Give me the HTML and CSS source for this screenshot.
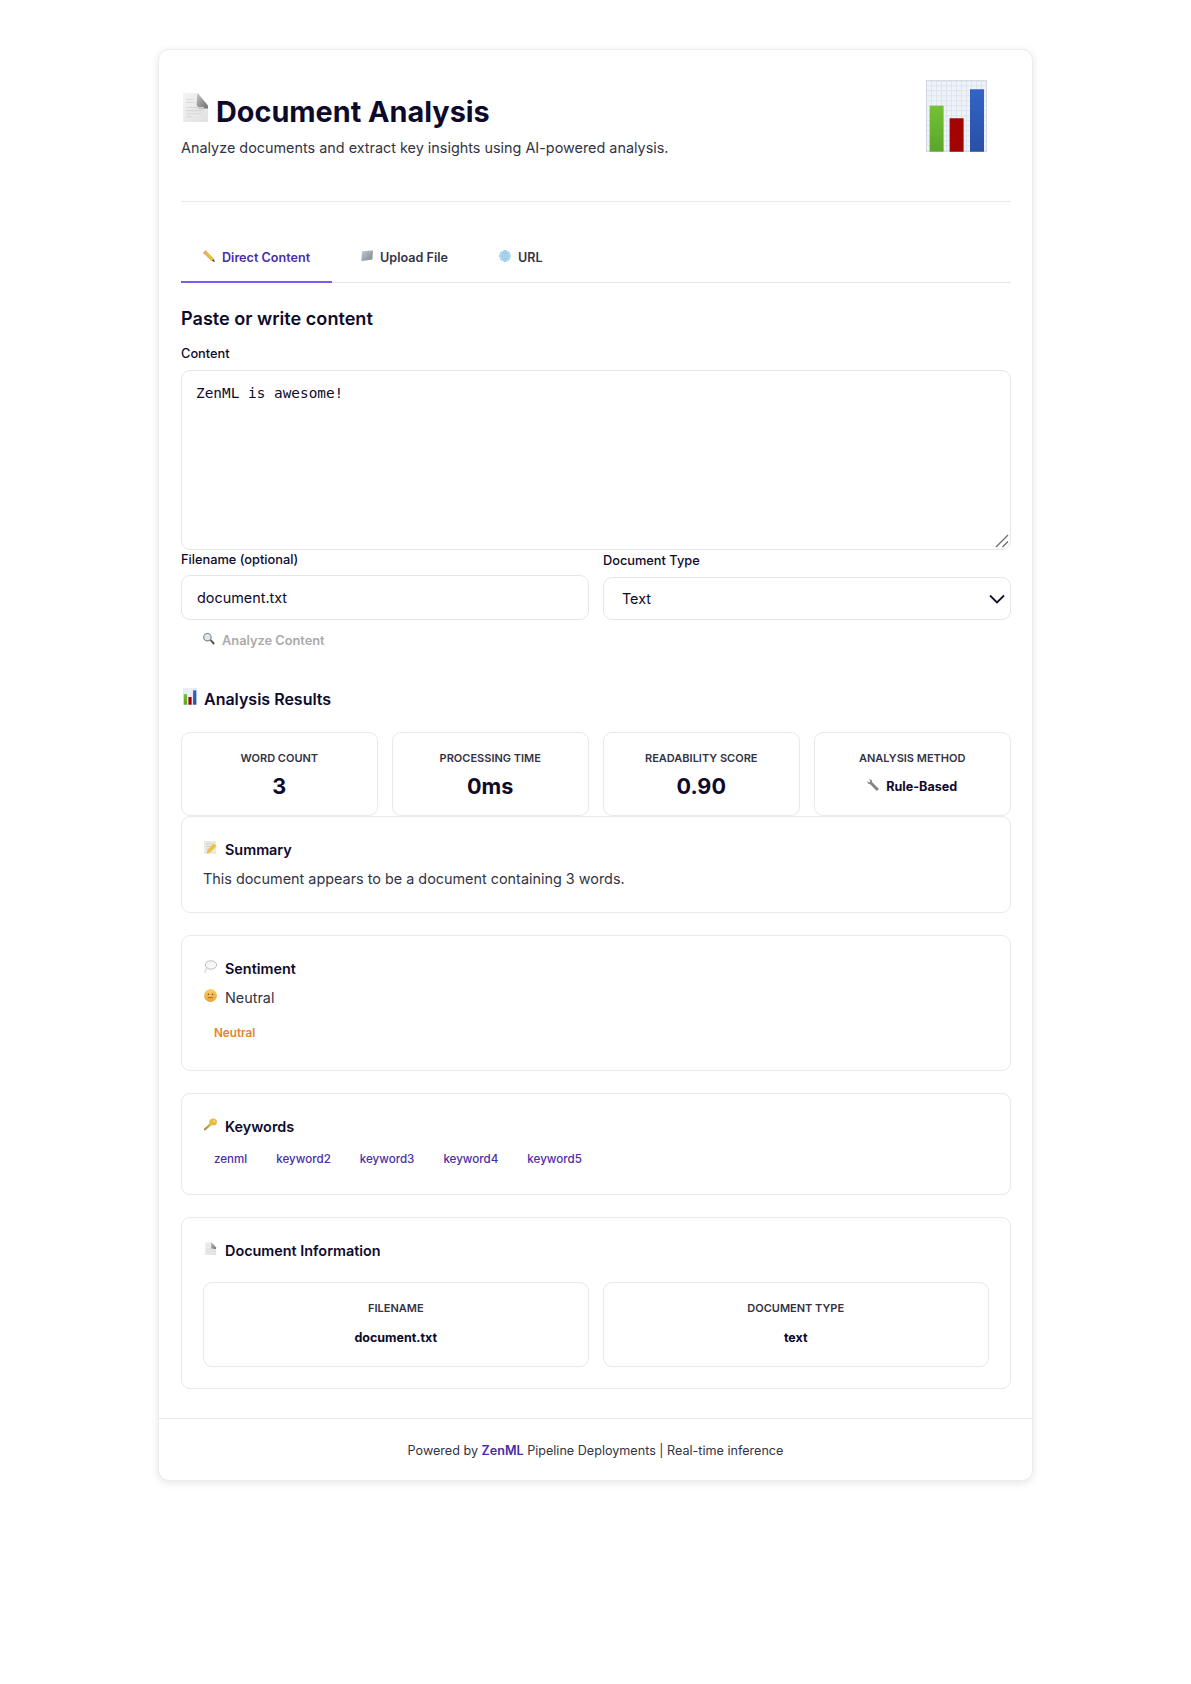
FILE: index.html
```html
<!DOCTYPE html>
<html lang="en">
<head>
    <meta charset="UTF-8">
    <meta name="viewport" content="width=device-width, initial-scale=1.0">
    <title>Document Analysis</title>
    <link rel="stylesheet" href="styles.css">
</head>
<body>
    <svg class="icon-defs" width="0" height="0">
        <defs>
            <linearGradient id="paper" x1="0" y1="0" x2="1" y2="1">
                <stop offset="0" stop-color="#f4f4f4"/>
                <stop offset="1" stop-color="#e0e0e0"/>
            </linearGradient>
            <linearGradient id="fold" x1="0" y1="0" x2="1" y2="1">
                <stop offset="0" stop-color="#c4c4c4"/>
                <stop offset="1" stop-color="#6f6f6f"/>
            </linearGradient>
            <linearGradient id="bar-green" x1="0" y1="0" x2="0" y2="1">
                <stop offset="0" stop-color="#74c234"/>
                <stop offset="1" stop-color="#5aa52c"/>
            </linearGradient>
            <linearGradient id="bar-blue" x1="0" y1="0" x2="0" y2="1">
                <stop offset="0" stop-color="#3264c8"/>
                <stop offset="1" stop-color="#2a4fa6"/>
            </linearGradient>
            <linearGradient id="face" x1="0" y1="0" x2="0" y2="1">
                <stop offset="0" stop-color="#f7d36a"/>
                <stop offset="1" stop-color="#eda03a"/>
            </linearGradient>
            <linearGradient id="gold" x1="0" y1="1" x2="1" y2="0">
                <stop offset="0" stop-color="#9a8448"/>
                <stop offset="1" stop-color="#e6b93f"/>
            </linearGradient>
            <linearGradient id="folder" x1="0" y1="0" x2="1" y2="1">
                <stop offset="0" stop-color="#c3c9cd"/>
                <stop offset="1" stop-color="#7d868d"/>
            </linearGradient>
            <pattern id="grid" width="5" height="5" patternUnits="userSpaceOnUse">
                <rect width="5" height="5" fill="#eff3f8"/>
                <path d="M0 .5H5M.5 0V5" stroke="#dce4ee" stroke-width="1"/>
            </pattern>
            <symbol id="i-doc" viewBox="0 0 24 28">
                <path d="M0 0H14L24 12V28H0Z" fill="url(#paper)"/>
                <path d="M14 0L24 12V15H15L13 11Z" fill="url(#fold)"/>
                <path d="M3 6H10M3 9H11M3 14H20M3 17H20M3 20H18M3 23H9" stroke="#d6d6d6" stroke-width="1"/>
            </symbol>
            <symbol id="i-chart" viewBox="0 0 61 71.5">
                <rect width="61" height="71.5" fill="url(#grid)"/>
                <rect x=".5" y=".5" width="60" height="70.5" fill="none" stroke="#d2d8df"/>
                <rect x="3.6" y="25.4" width="14" height="46" fill="url(#bar-green)"/>
                <rect x="23.6" y="38" width="14" height="33.5" fill="#a20404"/>
                <rect x="44" y="9" width="14" height="62.5" fill="url(#bar-blue)"/>
            </symbol>
            <symbol id="i-pencil" viewBox="0 0 12 12">
                <path d="M0 3L2.6 .2 10 7.8 12 12 7.6 10.2Z" fill="#eab93f"/>
                <path d="M0 3L2.6 .2 4 1.6 1.4 4.4Z" fill="#d9a89c"/>
                <path d="M10.6 9L12 12 8.8 10.8Z" fill="#4e4638"/>
            </symbol>
            <symbol id="i-folder" viewBox="0 0 12 11">
                <path d="M1 .8L11.6 0C11.9 0 12 .2 12 .5L11.4 9 .9 10.6C.6 10.6 .4 10.4 .4 10.1Z" fill="url(#folder)"/>
            </symbol>
            <symbol id="i-globe" viewBox="0 0 12 12">
                <circle cx="6" cy="6" r="6" fill="#bfe2f4"/>
                <path d="M.2 6H11.8M1 3.2H11M1 8.8H11M6 .2V11.8M6 .2C2.6 3 2.6 9 6 11.8M6 .2C9.4 3 9.4 9 6 11.8" fill="none" stroke="#7fb6d8" stroke-width=".55"/>
            </symbol>
            <symbol id="i-search" viewBox="0 0 12 12">
                <path d="M6.4 6.8L7.6 5.8 11.8 10.2 10.4 11.8Z" fill="#4a4a4a"/>
                <circle cx="4.4" cy="4.2" r="3.7" fill="#dfe8ee" stroke="#808080" stroke-width="1.1"/>
            </symbol>
            <symbol id="i-wrench" viewBox="0 0 12 12">
                <path d="M3.2 5.2L9.8 12 12 10 5.2 3.2 4.8 1.2 2.2 0 3.4 2.4 2.4 3.4 0 2.2 1.2 4.8Z" fill="#858585"/>
            </symbol>
            <symbol id="i-memo" viewBox="0 0 13 13">
                <rect y="0" width="12" height="13" fill="#ece9e2"/>
                <path d="M2 3H10M2 5.5H8M2 8H6" stroke="#cfcabd" stroke-width=".8"/>
                <path d="M3.4 9L9.8 2.4 12.6 5 6 11.4 2.6 12.4Z" fill="#eec13f"/>
            </symbol>
            <symbol id="i-bubble" viewBox="0 0 13 13">
                <ellipse cx="7" cy="5" rx="5.7" ry="4.2" fill="#f6f6f6" stroke="#b8b8b8" stroke-width=".9"/>
                <circle cx="1.8" cy="9.6" r="1" fill="#ececec" stroke="#c4c4c4" stroke-width=".4"/>
                <circle cx="1" cy="12" r=".7" fill="#ececec" stroke="#c4c4c4" stroke-width=".4"/>
            </symbol>
            <symbol id="i-face" viewBox="0 0 13 13">
                <circle cx="6.5" cy="6.5" r="6.5" fill="url(#face)"/>
                <circle cx="4.4" cy="5.2" r=".8" fill="#7a5320"/>
                <circle cx="8.6" cy="5.2" r=".8" fill="#7a5320"/>
                <path d="M4 8.6H9" stroke="#7a5320" stroke-width=".7"/>
            </symbol>
            <symbol id="i-key" viewBox="0 0 14 13">
                <path d="M0 11.2L7 4.6 8.6 6.4 1.6 12.8 0 12.6Z" fill="url(#gold)"/>
                <ellipse cx="9.8" cy="3.8" rx="4.2" ry="3.8" fill="#e8bb42"/>
                <circle cx="11" cy="2.8" r=".9" fill="#fbeebc"/>
            </symbol>
        </defs>
    </svg>

    <div class="app">
        <header class="header">
            <div>
                <h1><svg class="icon-title"><use href="#i-doc"/></svg>Document Analysis</h1>
                <p class="subtitle">Analyze documents and extract key insights using AI-powered analysis.</p>
            </div>
            <svg class="header-logo"><use href="#i-chart"/></svg>
        </header>

        <nav class="tabs">
            <div class="tab active"><svg class="icon-sm"><use href="#i-pencil"/></svg>Direct Content</div>
            <div class="tab"><svg class="icon-sm"><use href="#i-folder"/></svg>Upload File</div>
            <div class="tab"><svg class="icon-sm"><use href="#i-globe"/></svg>URL</div>
        </nav>

        <h2 class="form-title">Paste or write content</h2>
        <label class="field-label" for="content">Content</label>
        <div class="textarea-wrap">
            <textarea id="content" spellcheck="false">ZenML is awesome!</textarea>
            <svg class="resizer" viewBox="0 0 14 14"><path d="M1 13L13 1M7.5 13L13 7.5" stroke="#6b6b6b" stroke-width="1.3" fill="none"/></svg>
        </div>

        <div class="field-row">
            <div>
                <label class="field-label" for="filename">Filename (optional)</label>
                <input id="filename" class="text-input" type="text" value="document.txt">
            </div>
            <div>
                <label class="field-label" for="doctype">Document Type</label>
                <div class="select-wrap">
                    <select id="doctype"><option>Text</option></select>
                    <svg class="chevron" viewBox="0 0 16 10"><path d="M1 1.5L8 8.5 15 1.5" stroke="#15112f" stroke-width="1.8" fill="none"/></svg>
                </div>
            </div>
        </div>

        <button class="analyze-btn" disabled><svg class="icon-sm"><use href="#i-search"/></svg>Analyze Content</button>

        <h3 class="results-title"><svg class="icon-results"><use href="#i-chart"/></svg>Analysis Results</h3>

        <div class="metrics">
            <div class="metric"><div class="metric-label">Word Count</div><div class="metric-value">3</div></div>
            <div class="metric"><div class="metric-label">Processing Time</div><div class="metric-value">0ms</div></div>
            <div class="metric"><div class="metric-label">Readability Score</div><div class="metric-value">0.90</div></div>
            <div class="metric"><div class="metric-label">Analysis Method</div><div class="metric-method"><svg class="icon-sm"><use href="#i-wrench"/></svg>Rule-Based</div></div>
        </div>

        <section class="panel">
            <h4 class="panel-title"><svg class="icon-panel"><use href="#i-memo"/></svg>Summary</h4>
            <p class="panel-text">This document appears to be a document containing 3 words.</p>
        </section>

        <section class="panel">
            <h4 class="panel-title"><svg class="icon-panel"><use href="#i-bubble"/></svg>Sentiment</h4>
            <p class="panel-text sentiment"><svg class="icon-panel"><use href="#i-face"/></svg>Neutral</p>
            <span class="badge">Neutral</span>
        </section>

        <section class="panel">
            <h4 class="panel-title"><svg class="icon-panel"><use href="#i-key"/></svg>Keywords</h4>
            <div class="keywords">
                <span>zenml</span>
                <span>keyword2</span>
                <span>keyword3</span>
                <span>keyword4</span>
                <span>keyword5</span>
            </div>
        </section>

        <section class="panel panel-info">
            <h4 class="panel-title"><svg class="icon-panel"><use href="#i-doc"/></svg>Document Information</h4>
            <div class="info-grid">
                <div class="metric info"><div class="metric-label">Filename</div><div class="info-value">document.txt</div></div>
                <div class="metric info"><div class="metric-label">Document Type</div><div class="info-value">text</div></div>
            </div>
        </section>

        <footer class="footer">Powered by <b>ZenML</b> Pipeline Deployments | Real-time inference</footer>
    </div>
</body>
</html>
```

FILE: styles.css
```css
* {
    box-sizing: border-box;
}

body {
    margin: 0;
    background: #fff;
    font-family: Inter, "Noto Sans", sans-serif;
    color: #0e0a2c;
}

svg {
    filter: blur(0.25px);
}

.icon-defs {
    position: absolute;
}

.app {
    width: 875px;
    margin: 49px auto 189px;
    padding: 0 21.5px 0 22px;
    background: #fff;
    border: 1px solid #ececef;
    border-radius: 11px;
    box-shadow: 0 2px 8px rgba(0, 0, 0, 0.1);
}

.header {
    display: flex;
    justify-content: space-between;
    align-items: flex-start;
    height: 152px;
    padding: 30px 24px 0 0;
    border-bottom: 1px solid #e9e9ec;
}

h1 {
    margin: 14px 0 0;
    font-size: 28.8px;
    line-height: 36px;
    font-weight: 700;
    display: flex;
    align-items: flex-start;
}

.icon-title {
    width: 25px;
    height: 29px;
    margin: -1px 8px 0 2px;
    flex: none;
}

.subtitle {
    margin: 7px 0 0;
    font-size: 14.4px;
    line-height: 22px;
    color: #333344;
}

.header-logo {
    width: 61px;
    height: 72px;
    flex: none;
}

.tabs {
    display: flex;
    gap: 7px;
    margin-top: 34px;
    border-bottom: 1px solid #e6e6ea;
}

.tab {
    display: flex;
    align-items: center;
    padding: 12px 22px 13px;
    margin-bottom: -1px;
    font-size: 12.6px;
    line-height: 20px;
    font-weight: 600;
    color: #333344;
    border-bottom: 2px solid transparent;
}

.tab.active {
    color: #4a2ca8;
    border-bottom-color: #7a5af8;
}

.icon-sm {
    width: 12px;
    height: 12px;
    margin: -5px 7px 0 0;
    flex: none;
}

.form-title {
    margin: 23px 0 0;
    font-size: 18.1px;
    line-height: 24px;
    font-weight: 600;
}

.field-label {
    display: block;
    margin-bottom: 7px;
    font-size: 12.8px;
    line-height: 18px;
    font-weight: 500;
}

.form-title + .field-label {
    margin-top: 15px;
}

.textarea-wrap {
    position: relative;
    height: 180px;
}

textarea {
    display: block;
    width: 100%;
    height: 100%;
    padding: 12px 14px;
    border: 1px solid #e6e6ea;
    border-radius: 9px;
    resize: none;
    outline: none;
    font-family: "DejaVu Sans Mono", monospace;
    font-size: 14.4px;
    line-height: 20px;
    color: #0e0a2c;
}

.resizer {
    position: absolute;
    right: 2px;
    bottom: 2px;
    width: 14px;
    height: 14px;
}

.field-row {
    display: grid;
    grid-template-columns: 1fr 1fr;
    gap: 14.4px;
    align-items: end;
    margin-top: 1px;
}

.text-input,
select {
    display: block;
    width: 100%;
    border: 1px solid #e6e6ea;
    border-radius: 9px;
    outline: none;
    background: #fff;
    font-family: Inter, sans-serif;
    font-size: 14.4px;
    color: #0e0a2c;
}

.text-input {
    height: 45px;
    margin-top: -1px;
    padding: 0 15px;
}

.select-wrap {
    position: relative;
}

select {
    height: 43px;
    padding: 0 18px;
    appearance: none;
}

.chevron {
    position: absolute;
    right: 6px;
    top: 17px;
    width: 16px;
    height: 10px;
    pointer-events: none;
}

.analyze-btn {
    display: flex;
    align-items: center;
    padding: 11px 22px;
    border: none;
    background: none;
    font-family: Inter, sans-serif;
    font-size: 12.8px;
    line-height: 20px;
    font-weight: 600;
    color: #aaaaaa;
}

.results-title {
    display: flex;
    align-items: center;
    margin: 25px 0 0;
    font-size: 16px;
    line-height: 24px;
    font-weight: 600;
}

.icon-results {
    width: 14px;
    height: 17px;
    margin: -6px 7px 0 2px;
    flex: none;
}

.metrics {
    display: grid;
    grid-template-columns: repeat(4, 1fr);
    gap: 14.4px;
    margin-top: 21px;
}

.metric {
    height: 84px;
    padding: 17px 8px 0;
    border: 1px solid #e9e9ec;
    border-radius: 9px;
    text-align: center;
}

.metric-label {
    font-size: 11px;
    line-height: 16px;
    font-weight: 600;
    text-transform: uppercase;
    color: #333344;
}

.metric-value {
    margin-top: 5px;
    font-size: 21.6px;
    line-height: 30px;
    font-weight: 700;
}

.metric-method {
    display: flex;
    justify-content: center;
    align-items: center;
    margin-top: 11px;
    font-size: 12.6px;
    line-height: 20px;
    font-weight: 700;
}

.panel {
    padding: 22px 21px;
    margin-bottom: 22px;
    border: 1px solid #e9e9ec;
    border-radius: 9px;
}

.panel-info {
    padding-bottom: 21px;
}

.panel-title {
    display: flex;
    align-items: center;
    margin: 0;
    font-size: 14.4px;
    line-height: 22px;
    font-weight: 600;
}

.icon-panel {
    width: 13px;
    height: 13px;
    margin: -6px 8px 0 1px;
    flex: none;
}

.panel-text {
    margin: 7px 0 0;
    font-size: 14.4px;
    line-height: 22px;
    color: #333344;
}

.sentiment {
    display: flex;
    align-items: center;
}

.badge {
    display: block;
    margin: 15px 0 6px 11px;
    font-size: 11.7px;
    line-height: 18px;
    font-weight: 600;
    color: #e5851f;
}

.keywords {
    display: flex;
    gap: 29px;
    margin: 12px 0 4px 11px;
    font-size: 11.6px;
    line-height: 18px;
    font-weight: 500;
    color: #4a2ca8;
}

.info-grid {
    display: grid;
    grid-template-columns: 1fr 1fr;
    gap: 14.4px;
    margin-top: 20px;
}

.metric.info {
    height: 85px;
}

.info-value {
    margin-top: 12px;
    font-size: 12.5px;
    line-height: 20px;
    font-weight: 700;
}

.footer {
    margin: 29px -21.5px 0 -22px;
    padding: 22px 0 19px;
    border-top: 1px solid #e9e9ec;
    text-align: center;
    font-size: 12.6px;
    line-height: 20px;
    color: #333344;
}

.footer b {
    font-weight: 600;
    color: #4a2ca8;
}
```
